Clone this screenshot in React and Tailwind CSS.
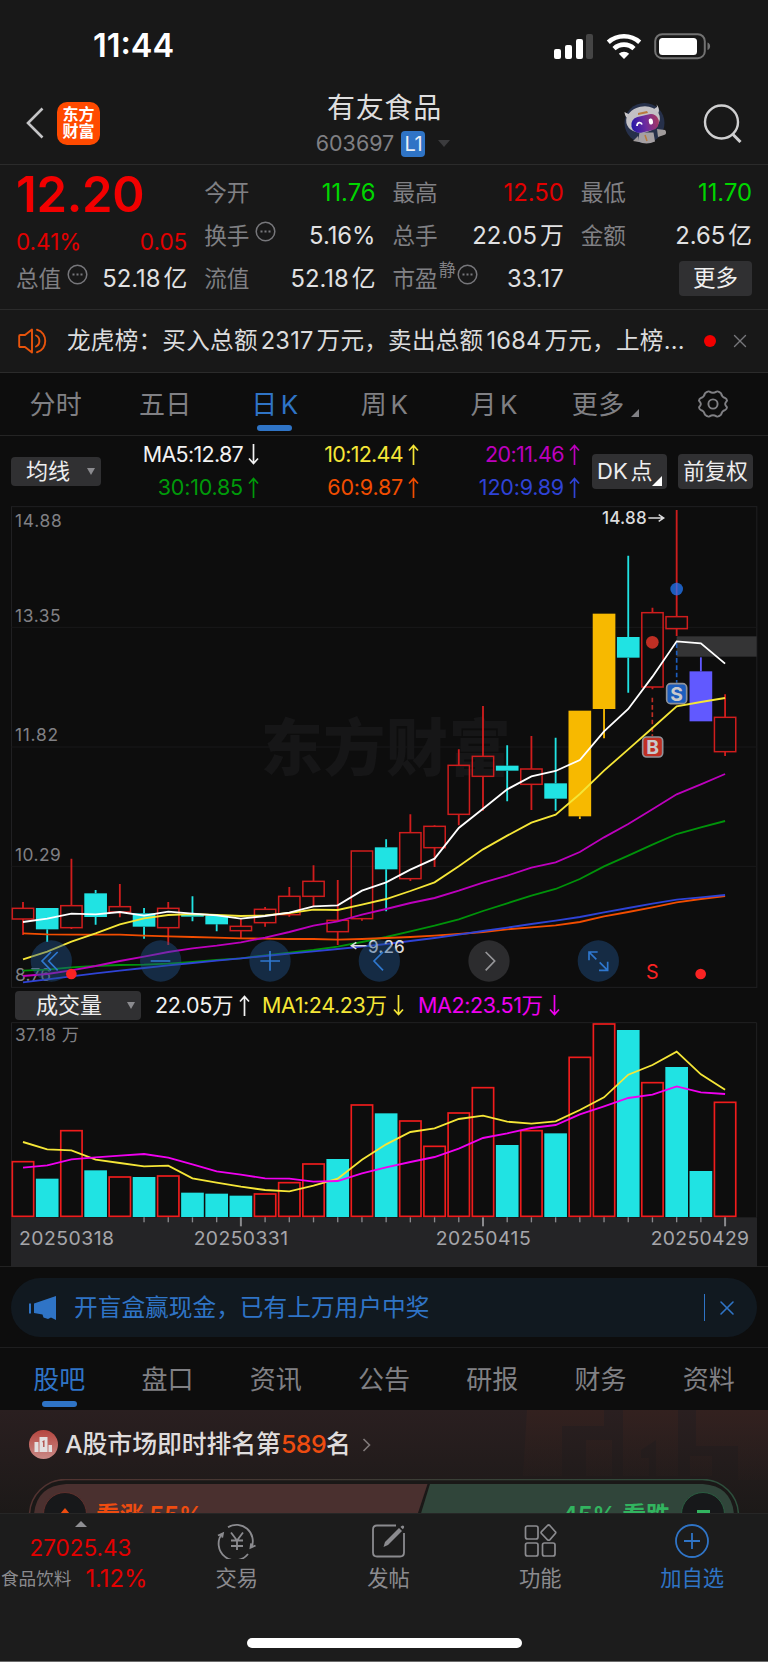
import { X } from 'lucide-react';

const STEP = 72.63;
const cx = (i) => 69 + i * STEP;

const COLORS = {
  up: '#cf1d1d',
  down: '#20e3e3',
  gold: '#f7b900',
  purple: '#6159ff',
};

// kind, high, body top, body bottom, low
const candles = [
  ['up', 1206, 1225, 1257, 1305],
  ['down', 1224, 1224, 1288, 1326],
  ['up', 1076, 1217, 1283, 1287],
  ['down', 1170, 1180, 1251, 1274],
  ['up', 1152, 1220, 1236, 1252],
  ['down', 1224, 1240, 1280, 1316],
  ['up', 1206, 1225, 1283, 1335],
  ['down', 1189, 1243, 1250, 1264],
  ['down', 1245, 1247, 1273, 1294],
  ['up', 1258, 1279, 1292, 1314],
  ['up', 1221, 1228, 1268, 1280],
  ['up', 1161, 1189, 1244, 1250],
  ['up', 1096, 1144, 1189, 1218],
  ['up', 1140, 1261, 1295, 1335],
  ['up', 1053, 1053, 1256, 1262],
  ['down', 1018, 1042, 1108, 1234],
  ['up', 943, 998, 1136, 1143],
  ['up', 976, 979, 1043, 1101],
  ['up', 748, 796, 943, 976],
  ['up', 618, 769, 829, 932],
  ['down', 736, 797, 812, 904],
  ['up', 708, 807, 853, 930],
  ['down', 713, 850, 896, 932],
  ['gold', 632, 632, 949, 957],
  ['gold', 341, 341, 627, 715],
  ['down', 167, 411, 473, 578],
  ['up', 323, 338, 561, 568],
  ['up', 30, 350, 386, 408],
  ['purple', 472, 514, 664, 664],
  ['up', 583, 652, 755, 768],
];

const maLines = [
  { color: '#00930a', values: [1412, 1409, 1402, 1398, 1395, 1394, 1391, 1386, 1380, 1375, 1366, 1358, 1350, 1340, 1326, 1311, 1294, 1277, 1258, 1233, 1210, 1187, 1167, 1137, 1099, 1067, 1034, 1002, 982, 963] },
  { color: '#f24d00', values: [1300, 1303, 1304, 1304, 1304, 1307, 1309, 1311, 1313, 1315, 1316, 1317, 1317, 1319, 1317, 1314, 1311, 1307, 1302, 1296, 1288, 1282, 1276, 1266, 1249, 1236, 1222, 1207, 1197, 1188] },
  { color: '#2f43d6', values: [1447, 1438, 1429, 1420, 1412, 1404, 1396, 1389, 1382, 1375, 1368, 1361, 1354, 1347, 1340, 1332, 1323, 1314, 1304, 1293, 1283, 1272, 1262, 1251, 1237, 1224, 1211, 1199, 1192, 1185] },
  { color: '#bd00bd', values: [1428, 1422, 1411, 1398, 1383, 1370, 1356, 1345, 1337, 1327, 1313, 1296, 1277, 1264, 1244, 1227, 1209, 1194, 1172, 1148, 1127, 1103, 1087, 1056, 1012, 972, 928, 883, 853, 822] },
  { color: '#f5e637', values: [1378, 1355, 1325, 1300, 1273, 1255, 1245, 1242, 1245, 1248, 1246, 1239, 1229, 1230, 1214, 1197, 1173, 1147, 1099, 1048, 1007, 968, 944, 882, 812, 748, 684, 619, 606, 594] },
  { color: '#ffffff', values: [1266, 1256, 1241, 1243, 1236, 1247, 1235, 1241, 1246, 1256, 1248, 1238, 1219, 1216, 1172, 1147, 1109, 1076, 984, 926, 868, 829, 813, 780, 694, 627, 530, 424, 430, 491] },
];

const volumes = [
  ['up', 543], ['down', 595], ['up', 450], ['down', 570], ['up', 589], ['down', 590],
  ['up', 586], ['down', 637], ['down', 640], ['down', 646], ['up', 640], ['up', 606],
  ['up', 550], ['down', 536], ['up', 373], ['down', 399], ['up', 421], ['up', 497],
  ['up', 397], ['up', 321], ['down', 494], ['up', 450], ['down', 459], ['up', 230],
  ['up', 130], ['down', 149], ['up', 306], ['down', 260], ['down', 572], ['up', 365],
];

const volLines = [
  { color: '#f5e637', values: [485, 507, 510, 538, 548, 558, 556, 594, 607, 619, 629, 633, 616, 595, 538, 492, 455, 444, 416, 406, 424, 430, 423, 389, 351, 283, 254, 214, 282, 328] },
  { color: '#f000f0', values: [562, 555, 537, 531, 526, 521, 532, 552, 573, 583, 594, 595, 604, 602, 579, 561, 545, 530, 505, 473, 459, 443, 434, 402, 378, 353, 343, 318, 336, 341] },
];

const toPoints = (values) => values.map((v, i) => `${cx(i)},${v}`).join(' ');

const StatusBar = () => (
  <div className="h-[86px] pl-[93px] pr-[57px] pt-[6px] flex items-center justify-between">
    <span className="text-[32.5px] font-semibold text-white tracking-[0px]">11:44</span>
    <svg width="158" height="28" viewBox="0 0 158 28" fill="#fff">
      <rect x="1" y="17" width="7" height="10" rx="2" />
      <rect x="12" y="13" width="7" height="14" rx="2" />
      <rect x="23" y="7" width="7" height="20" rx="2" />
      <rect x="33" y="2" width="7" height="25" rx="2" fill="#454545" />
      <g fill="none" stroke="#fff" strokeWidth="4.6">
        <path d="M55.3 10.2a23.6 23.6 0 0 1 31.4 0" />
        <path d="M61 16.6a14.6 14.6 0 0 1 20 0" />
      </g>
      <path d="M71 27l-5.2-5.3a7.8 7.8 0 0 1 10.4 0z" />
      <rect x="102.2" y="2.2" width="49.6" height="24" rx="7" fill="none" stroke="#727272" strokeWidth="2" />
      <rect x="106" y="6" width="38" height="17" rx="3.5" />
      <path d="M154.500 10.500c3.500 1 3.500 6.500 0 7.500z" fill="#727272" />
    </svg>
  </div>
);

const Robot = () => (
  <svg width="44" height="42" viewBox="0 0 44 42">
    <defs>
      <linearGradient id="visor" x1="0" y1="0" x2="1" y2="0">
        <stop offset="0" stopColor="#2418a8" />
        <stop offset="0.5" stopColor="#6b2aa0" />
        <stop offset="1" stopColor="#a8395f" />
      </linearGradient>
    </defs>
    <circle cx="21.500" cy="21" r="20" fill="#26304a" />
    <path d="M1.500 10c.5 5 3 7 7 7l4-6c-5 2-8 1-11-1zM34 5c0-2-.5-2.500-1-3 2.500 2 4.500 7 1.500 10l-5-4z" fill="#c9c7cb" />
    <path d="M15 39.500l1.500-9h14l1.500 9a20 20 0 0 1-17 0z" fill="#a5a0a3" />
    <path d="M34 27l8 1c2 2 1 5-1 5l-6 2zM15 34l-5 5 6 1z" fill="#a09b9b" />
    <ellipse cx="20" cy="17.500" rx="17" ry="13" transform="rotate(-12 20 17.500)" fill="#c3c1c5" />
    <path d="M15 11l9-2 1 2-10 2z" fill="#b97a3e" />
    <rect x="8" y="13.500" width="28" height="16" rx="8" transform="rotate(-13 22 21)" fill="url(#visor)" />
    <path d="M14 24c0-4 4-4.500 5-1.500" fill="none" stroke="#fff" strokeWidth="1.800" />
    <rect x="26" y="16.500" width="4" height="6" rx="2" transform="rotate(-12 28 20)" fill="#fff" />
    <path d="M22 33l2 6" stroke="#b97a3e" strokeWidth="1.500" />
  </svg>
);

const Header = () => (
  <div className="h-[79px] border-b border-[#2b2b2b] flex items-center justify-between pl-[26px] pr-[26px] pb-[4px]">
    <div className="w-[200px] flex items-center gap-[13px]">
      <svg width="18" height="32" viewBox="0 0 18 32" fill="none" stroke="#c4c4c6" strokeWidth="2.600">
        <path d="M16.500 1.500L2 16l14.500 14.500" />
      </svg>
      <div className="w-[43px] h-[43px] rounded-[10px] bg-[#ff4a00] text-white text-[16px] leading-[17px] font-bold flex flex-col items-center justify-center">
        <span>东方</span>
        <span>财富</span>
      </div>
    </div>
    <div className="flex flex-col items-center">
      <div className="text-[28px] leading-[34px] tracking-[0.7px] text-[#dededf] pl-[1px] mt-[3px]">有友食品</div>
      <div className="flex items-center h-[29px] mt-[4px] -ml-[2px]">
        <span className="text-[21.5px] text-[#808084]">603697</span>
        <span className="ml-[7px] w-[24px] h-[26px] rounded-[4px] bg-[#2f74c6] text-[#e8eef6] text-[20px] tracking-[-0.5px] flex items-center justify-center">L1</span>
        <span className="ml-[13px] border-x-[6.5px] border-x-transparent border-t-[7px] border-t-[#3b3b3d]"></span>
      </div>
    </div>
    <div className="w-[200px] flex items-center justify-end gap-[36px]">
      <Robot />
      <svg width="39" height="39" viewBox="0 0 39 39" fill="none" stroke="#cfcfd0" strokeWidth="2.400">
        <circle cx="18.500" cy="18" r="16.500" />
        <path d="M29.500 30l8 8" strokeWidth="3" />
      </svg>
    </div>
  </div>
);

const Dots = () => (
  <svg className="-translate-y-1" width="21" height="21" viewBox="0 0 21 21" fill="none" stroke="#77777b" strokeWidth="1.500">
    <circle cx="10.500" cy="10.500" r="9.300" />
    <path d="M5.500 10.500h2M9.500 10.500h2M13.500 10.500h2" strokeWidth="2" />
  </svg>
);

const Stat = ({ label, value, sup, dots, color }) => (
  <div className="h-[43px] flex items-center justify-between">
    <span className="flex items-center text-[22.6px] text-[#808084] whitespace-nowrap">
      {label}
      {sup && <span className="text-[17px] -translate-y-2 ml-[1px]">{sup}</span>}
      {dots && <span className={sup ? 'ml-[1px]' : 'ml-[6px]'}><Dots /></span>}
    </span>
    <span className={`text-[23.8px] whitespace-nowrap [text-autospace:normal] ${color || 'text-[#e1e1e2]'}`}>{value}</span>
  </div>
);

const Quote = () => (
  <div className="h-[145px] border-b border-[#2b2b2b] px-[16px] pt-[6px] grid grid-cols-4 gap-x-[17px]">
    <div>
      <div className="h-[50px] leading-[48px] text-[49px] font-semibold text-[#f20000] tracking-[-0.3px]">12.20</div>
      <div className="h-[36px] pt-[5px] flex items-center justify-between text-[22.5px] text-[#e30000]">
        <span>0.41%</span>
        <span>0.05</span>
      </div>
      <Stat label="总值" value="52.18亿" dots />
    </div>
    <div>
      <Stat label="今开" value="11.76" color="text-[#00d600]" />
      <Stat label="换手" value="5.16%" dots />
      <Stat label="流值" value="52.18亿" />
    </div>
    <div>
      <Stat label="最高" value="12.50" color="text-[#e30000]" />
      <Stat label="总手" value="22.05万" />
      <Stat label="市盈" value="33.17" sup="静" dots />
    </div>
    <div>
      <Stat label="最低" value="11.70" color="text-[#00d600]" />
      <Stat label="金额" value="2.65亿" />
      <div className="h-[43px] flex items-center justify-end">
        <button className="w-[73px] h-[35px] rounded-[4px] bg-[#303032] text-[22.5px] leading-none text-[#f0f0f0]">更多</button>
      </div>
    </div>
  </div>
);

const Notice = () => (
  <div className="h-[63px] border-b border-[#2b2b2b] pl-[18px] pr-[17px] flex items-center">
    <svg width="31" height="26" viewBox="0 0 31 26" fill="none" stroke="#e8540c" strokeWidth="1.900">
      <path d="M1.200 8q0-1 1-1H7l7-5.500v23L7 19H2.200q-1 0-1-1z" strokeLinejoin="round" />
      <path d="M18 7.500c4.500 2 4.500 9 0 11M19 1.800c11 2.500 11 20 0 22.500" strokeLinecap="round" />
    </svg>
    <span className="ml-[18px] w-[620px] text-[23.6px] tracking-[0.25px] text-[#dcdcdd] whitespace-nowrap [text-autospace:normal]">龙虎榜：买入总额2317万元，卖出总额1684万元，上榜...</span>
    <span className="ml-[17px] w-[12px] h-[12px] rounded-full bg-[#f20000]"></span>
    <X className="ml-auto text-[#77777b]" size={22} strokeWidth={1.5} />
  </div>
);

const PeriodTabs = () => {
  const tabs = ['分时', '五日', '日K', '周K', '月K'];
  return (
    <div className="h-[63px] border-b border-[#242424] pl-[1px] grid grid-cols-7 text-[26px] text-[#808084] tracking-[0.3px] [text-autospace:normal]">
      {tabs.map((tab) => {
        const active = tab === '日K';
        return (
          <div key={tab} className={`relative flex items-center justify-center ${active ? 'text-[#2f74c6]' : ''}`}>
            {tab}
            {active && <span className="absolute bottom-[4px] w-[35px] h-[6px] rounded-[3px] bg-[#2f74c6]"></span>}
          </div>
        );
      })}
      <div className="flex items-center justify-center pl-[4px]">
        更多
        <span className="ml-[7px] mt-[18px] border-l-[8px] border-l-transparent border-b-[8px] border-b-[#808084]"></span>
      </div>
      <div className="flex items-center justify-center">
        <svg width="30" height="28" viewBox="0 0 30 28" fill="none" stroke="#808084" strokeWidth="1.900" strokeLinejoin="round">
          <path d="M11.500 1.600Q15 3.800 18.500 1.600Q19.800 1 21 1.900L23 3.200Q23.800 7 27.300 8.200Q28.800 8.900 28.900 10.200Q29 11.200 28 12Q26.400 14 28 16Q29 16.800 28.900 17.800Q28.800 19.100 27.300 19.800Q23.800 21 23 24.800L21 26.100Q19.800 27 18.500 26.400Q15 24.200 11.500 26.400Q10.200 27 9 26.100L7 24.800Q6.200 21 2.700 19.800Q1.200 19.100 1.100 17.800Q1 16.800 2 16Q3.600 14 2 12Q1 11.200 1.100 10.200Q1.200 8.900 2.700 8.200Q6.200 7 7 3.200L9 1.900Q10.200 1 11.500 1.600Z" />
          <circle cx="15" cy="14" r="4.600" />
        </svg>
      </div>
    </div>
  );
};

const Arrow = ({ down }) => (
  <svg className={down ? 'rotate-180' : ''} width="11" height="21" viewBox="0 0 11 21" fill="none" stroke="currentColor" strokeWidth="1.700">
    <path d="M5.500 21V1M1 6.500l4.500-5 4.500 5" />
  </svg>
);

const Ma = ({ text, down, className }) => (
  <div className={`h-[33px] flex items-center justify-end gap-[5px] text-[21.5px] ${className}`}>
    {text}
    <Arrow down={down} />
  </div>
);

const MaBar = () => (
  <div className="h-[70px] pl-[11px] pr-[15px] flex items-center">
    <div className="w-[90px] h-[29px] rounded-[4px] bg-[#303032] text-[22px] leading-none text-[#ededee] flex items-center pl-[15px]">
      均线
      <span className="ml-[17px] border-x-[4px] border-x-transparent border-t-[7px] border-t-[#8b8b8f]"></span>
    </div>
    <div className="w-[480px] grid grid-cols-[158px_160px_161px]">
      <Ma text="MA5:12.87" down className="text-[#f2f2f2] tracking-[-0.7px]" />
      <Ma text="10:12.44" className="text-[#f5e637] tracking-[-0.7px]" />
      <Ma text="20:11.46" className="text-[#bd00bd] tracking-[-0.6px]" />
      <Ma text="30:10.85" className="text-[#009a0a] tracking-[-0.2px]" />
      <Ma text="60:9.87" className="text-[#f24d00] tracking-[-0.2px]" />
      <Ma text="120:9.89" className="text-[#2f43d6] tracking-[-0.2px]" />
    </div>
    <div className="relative ml-auto w-[75px] h-[35px] rounded-[4px] bg-[#303032] text-[22px] leading-[34px] text-[#ededee] pl-[5px] whitespace-nowrap [text-autospace:normal]">
      DK点
      <span className="absolute right-[5px] bottom-[3px] border-l-[10px] border-l-transparent border-b-[10px] border-b-white"></span>
    </div>
    <div className="ml-[11px] w-[75px] h-[35px] rounded-[4px] bg-[#303032] text-[21.5px] leading-[34px] text-[#ededee] text-center">前复权</div>
  </div>
);

const Badge = ({ x, y, letter, fill }) => (
  <g>
    <rect x={x - 30} y={y - 30} width="60" height="60" rx="12" fill={fill} stroke="#8f9299" strokeWidth="5" />
    <text x={x} y={y + 21} textAnchor="middle" fontSize="58" fontWeight="700" fill="#c9c9cc">{letter}</text>
  </g>
);

const PriceChart = () => (
  <svg className="block" width="768" height="482" viewBox="0 18 2304 1446">
    <g stroke="#202022" strokeWidth="3" fill="none">
      <rect x="34.500" y="20" width="2236" height="1442" />
      <path d="M34 382H2270M34 741H2270M34 1099H2270" stroke="#19191a" />
    </g>
    <text x="782" y="812" fontSize="186" fontWeight="900" fill="#161617" textLength="750">东方财富</text>
    <rect x="2030" y="409" width="240" height="61" fill="#343435" />
    <g fontSize="52" fill="#808084">
      <text x="45" y="80" textLength="140">14.88</text>
      <text x="45" y="365" textLength="137">13.35</text>
      <text x="45" y="723" textLength="129">11.82</text>
      <text x="45" y="1083" textLength="137">10.29</text>
      <text x="45" y="1443" textLength="108">8.76</text>
    </g>
    {candles.map(([kind, high, top, bottom, low], i) => {
      const color = COLORS[kind];
      const x = cx(i);
      return (
        <g key={i} stroke={color} strokeWidth="5.500">
          <path d={`M${x} ${high}V${top}M${x} ${bottom}V${low}`} />
          {kind === 'up' ? (
            <rect x={x - 32} y={top} width="64" height={bottom - top} fill="none" strokeWidth="4.500" />
          ) : (
            <rect x={x - 34} y={top} width="68" height={bottom - top} fill={color} stroke="none" />
          )}
        </g>
      );
    })}
    <path d="M2030 430V548" stroke="#1c5dbd" strokeWidth="5" strokeDasharray="14 8" />
    <path d="M1957 593V708" stroke="#bf2f24" strokeWidth="5" strokeDasharray="14 8" />
    <circle cx="2030" cy="267" r="19" fill="#1c5dbd" />
    <path d="M2030 248V286" stroke="#5b5bc0" strokeWidth="5" />
    <circle cx="1957" cy="427" r="19" fill="#bf2f24" />
    <Badge x={2030} y={581} letter="S" fill="#1c5dbd" />
    <Badge x={1958} y={741} letter="B" fill="#bf2f24" />
    {maLines.map((line) => (
      <polyline key={line.color} points={toPoints(line.values)} fill="none" stroke={line.color} strokeWidth="5.500" />
    ))}
    <g fill="#dcdcdd" fontSize="51" fontWeight="500">
      <text x="1806" y="73" textLength="134">14.88</text>
      <text x="1104" y="1358" textLength="110">9.26</text>
      <path d="M1945 54h46M1976 44l15 10-15 10M1100 1337h-46M1069 1327l-15 10 15 10" fill="none" stroke="#dcdcdd" strokeWidth="4.500" />
    </g>
    <g fill="#215591" fillOpacity="0.42">
      {[154, 482, 810, 1138, 1795].map((x) => (
        <circle key={x} cx={x} cy="1383" r="62" />
      ))}
    </g>
    <circle cx="1467" cy="1383" r="62" fill="#2c2c2e" />
    <g fill="none" stroke="#2f78cf" strokeWidth="5">
      <path d="M153 1356l-27 27 27 28M173 1356l-27 27 27 28" />
      <path d="M452 1383h59M781 1383h59M810 1353v59M1149 1356l-27 27 27 28" />
      <path d="M1767 1381v-25h26M1767 1356l22 22M1823 1385v26h-26M1823 1411l-24-24" />
    </g>
    <path d="M1457 1356l27 27-27 28" fill="none" stroke="#97979a" strokeWidth="5" />
    <circle cx="214" cy="1422" r="16" fill="#fa2323" />
    <circle cx="2102" cy="1422" r="16" fill="#fa2323" />
    <text x="1957" y="1437" textAnchor="middle" fontSize="59" fill="#fa2323">S</text>
  </svg>
);

const VolumeBar = () => (
  <div className="h-[34px] pl-[15px] flex items-center text-[21.5px]">
    <div className="w-[126px] h-[29px] rounded-[4px] bg-[#303032] text-[22px] leading-none text-[#ededee] flex items-center pl-[21px]">
      成交量
      <span className="ml-[25px] border-x-[4px] border-x-transparent border-t-[7px] border-t-[#8b8b8f]"></span>
    </div>
    <div className="ml-[14px] w-[107px] flex items-center gap-[6px] text-[#f2f2f2] tracking-[-0.3px]">22.05万<Arrow /></div>
    <div className="w-[156px] flex items-center gap-[6px] text-[#f5e637] tracking-[-0.4px]">MA1:24.23万<Arrow down /></div>
    <div className="flex items-center gap-[6px] text-[#f000f0] tracking-[-0.4px]">MA2:23.51万<Arrow down /></div>
  </div>
);

const VolumeChart = () => (
  <svg className="block" width="768" height="245" viewBox="0 125 2304 735">
    <path d="M34.500 711V127H2270V711" fill="none" stroke="#202022" strokeWidth="3" />
    <rect x="33" y="711" width="2238" height="149" fill="#242426" />
    <path d="M0 859H2304" stroke="#262626" strokeWidth="3" />
    <text x="45" y="182" fontSize="52" fill="#808084" textLength="192">37.18 万</text>
    {volumes.map(([kind, top], i) =>
      kind === 'up' ? (
        <rect key={i} x={cx(i) - 32} y={top + 1} width="64" height={707 - top} fill="none" stroke="#f01c1c" strokeWidth="5" />
      ) : (
        <rect key={i} x={cx(i) - 34} y={top} width="68" height={710 - top} fill={COLORS.down} />
      )
    )}
    {volLines.map((line) => (
      <polyline key={line.color} points={toPoints(line.values)} fill="none" stroke={line.color} strokeWidth="5.500" />
    ))}
    {volumes.map((_, i) => {
      if (i < 5) return null;
      const major = i % 10 === 9;
      return <path key={i} d={`M${cx(i)} 711v${major ? 27 : 15}`} stroke="#8a8a8d" strokeWidth={major ? 6 : 4} />;
    })}
    <g fontSize="58" fill="#a6a6aa">
      <text x="57" y="795" textLength="285">20250318</text>
      <text x="581" y="795" textLength="283">20250331</text>
      <text x="1307" y="795" textLength="285">20250415</text>
      <text x="1952" y="795" textLength="295">20250429</text>
    </g>
  </svg>
);

const Promo = () => (
  <div className="h-[81px] border-b border-[#1e1e1f] px-[11px] pt-[11px]">
    <div className="h-[59px] rounded-full bg-[#111920] flex items-center pl-[18px] pr-[18px] text-[#2f74c6]">
      <svg width="28" height="24" viewBox="0 0 28 24" fill="currentColor">
        <path d="M0 7.500h2v10H0zM5 7.500L27 0v24l-5-2.500-3 1.500-4.500-1.500-1-3L5 17z" />
      </svg>
      <span className="ml-[17px] text-[23.7px]">开盲盒赢现金，已有上万用户中奖</span>
      <span className="ml-auto w-[1.5px] h-[27px] bg-[#2f74c6]"></span>
      <X className="ml-[10px]" size={24} strokeWidth={1.6} />
    </div>
  </div>
);

const SectionTabs = () => {
  const tabs = ['股吧', '盘口', '资讯', '公告', '研报', '财务', '资料'];
  return (
    <div className="h-[62px] px-[5px] grid grid-cols-7 text-[26px] text-[#808084]">
      {tabs.map((tab, i) => (
        <div key={tab} className={`relative flex items-center justify-center ${i === 0 ? 'text-[#2f74c6]' : ''}`}>
          {tab}
          {i === 0 && <span className="absolute bottom-[3px] w-[35px] h-[6px] rounded-[3px] bg-[#2f74c6]"></span>}
        </div>
      ))}
    </div>
  );
};

const Sentiment = () => (
  <div className="relative h-[103px] overflow-hidden bg-linear-to-b from-[#2a1f20] to-[#1c1918]">
    <svg className="absolute right-0 top-0" width="248" height="72" viewBox="0 0 248 72">
      <defs>
        <linearGradient id="podium" gradientUnits="userSpaceOnUse" x1="0" y1="0" x2="0" y2="72">
          <stop offset="0" stopColor="#33211f" />
          <stop offset="1" stopColor="#2a1e1c" stopOpacity="0.200" />
        </linearGradient>
      </defs>
      <path d="M7 0h77v16H42v50H3zM103 0h55v66h-22V30l-15 10v8h8v18h-26zM66 30h26v36H66zM176 0h72v70h-30V36h-42zM170 46h22v20h-22z" fill="url(#podium)" />
    </svg>
    <div className="relative h-[69px] pl-[29px] flex items-center">
      <svg width="29" height="29" viewBox="0 0 29 29">
        <defs>
          <linearGradient id="rank" x1="0" y1="0" x2="0" y2="1">
            <stop offset="0" stopColor="#b6463f" />
            <stop offset="1" stopColor="#c98a87" />
          </linearGradient>
        </defs>
        <circle cx="14.500" cy="14.500" r="14.500" fill="url(#rank)" />
        <path d="M5.500 12h4v10h-4zM10.500 7h8v15h-8zM19.500 15h3.500v7h-3.500z" fill="#e3dfdf" />
        <path d="M13.500 12l1.300-.8V17" fill="none" stroke="#b0504b" strokeWidth="1.400" />
      </svg>
      <span className="ml-[7px] mt-[1px] text-[24.9px] tracking-[-0.1px] font-medium text-[#dfdcdc]">
        A股市场即时排名第<span className="text-[#ee4c10] tracking-[-0.5px]">589</span>名
      </span>
      <svg className="ml-[11px]" width="9" height="14" viewBox="0 0 9 14" fill="none" stroke="#807a7a" strokeWidth="1.600">
        <path d="M1.500 1l6 6-6 6" />
      </svg>
    </div>
    <svg className="relative block" width="768" height="34" viewBox="0 0 768 34">
      <defs>
        <linearGradient id="voteEdge">
          <stop offset="0" stopColor="#523230" />
          <stop offset="0.500" stopColor="#3d3b35" />
          <stop offset="1" stopColor="#2c4f3c" />
        </linearGradient>
      </defs>
      <rect x="29.500" y="0.500" width="709" height="72" rx="36" fill="#1a1817" stroke="url(#voteEdge)" strokeWidth="1.500" />
      <path d="M34 36Q36 7 66 5H427.500L418 34z" fill="#4a302f" />
      <path d="M430 5H703Q732 7 734 36H420.500z" fill="#30453a" />
      <circle cx="65" cy="35" r="21.500" fill="#17181a" stroke="#5e302d" strokeWidth="1" />
      <circle cx="703" cy="35" r="21.500" fill="#17181a" stroke="#2a5c40" strokeWidth="1" />
      <path d="M65 29l-5 6h10z" fill="#ee4c10" />
      <path d="M697 31h13v4h-13z" fill="#32b45f" />
      <text x="96" y="45" fontSize="24" fontWeight="600" fill="#ee4c10" textLength="107">看涨 55%</text>
      <text x="562" y="45" fontSize="24" fontWeight="600" fill="#32b45f" textLength="108">45% 看跌</text>
    </svg>
  </div>
);

const TradeIcon = () => (
  <svg width="40" height="36" viewBox="0 0 40 36" fill="none" stroke="currentColor" strokeWidth="1.800">
    <path d="M11 4.200A16.300 16.300 0 0 1 34.500 24.500M38.500 22.500l-5 2.300.6-4.500M31 31A16.300 16.300 0 0 1 5.200 10.500M1 12.500l5-2.300-.8 4.500" />
    <path d="M14 9.500l6 8 6-8M14 17.500h12M14 23h12M20 17.500V27" />
  </svg>
);

const PostIcon = () => (
  <svg width="34" height="36" viewBox="0 0 34 36" fill="none" stroke="currentColor" strokeWidth="1.800">
    <path d="M24 2.500H5q-4 0-4 4V29.500q0 4 4 4H28q4 0 4-4V10" />
    <path d="M13 19L27 5l3 3L16 22l-4.500 2z" fill="currentColor" stroke="none" />
    <path d="M28.500 4l1-1q1.500-1 2.300 0t0 2l-1 1.200z" fill="currentColor" stroke="none" />
  </svg>
);

const GridIcon = () => (
  <svg width="33" height="36" viewBox="0 0 33 36" fill="none" stroke="currentColor" strokeWidth="1.700">
    <rect x="1.500" y="3" width="12.500" height="13" rx="2" />
    <rect x="1.500" y="20" width="12.500" height="13" rx="2" />
    <rect x="18.500" y="20" width="12.500" height="13" rx="2" />
    <path d="M23.500 2.500l-6 6.200q-1 .9 0 1.800l6 6.300q1.200.9 2.300 0l5.500-6.300q1-.9 0-1.800L25.800 2.500q-1.100-1-2.300 0z" />
  </svg>
);

const AddIcon = () => (
  <svg width="36" height="36" viewBox="0 0 36 36" fill="none" stroke="currentColor" strokeWidth="1.800">
    <circle cx="18" cy="18" r="16" />
    <path d="M10 18h16M18 10v16" />
  </svg>
);

const BottomNav = () => {
  const items = [
    { label: '交易', icon: TradeIcon },
    { label: '发帖', icon: PostIcon },
    { label: '功能', icon: GridIcon },
    { label: '加自选', icon: AddIcon, active: true },
  ];
  return (
    <div className="h-[149px] bg-[#1c1c1c] border-t border-[#262626] border-b border-b-[#6a6a6a] flex flex-col justify-between">
      <div className="h-[80px] flex">
        <div className="w-[161px] flex flex-col items-center">
          <span className="mt-[7px] border-x-[6px] border-x-transparent border-b-[6px] border-b-[#8f8f93]"></span>
          <span className="mt-[5px] h-[32px] leading-[32px] text-[22.5px] text-[#e30000]">27025.43</span>
          <div className="w-full pl-[1px] h-[30px] flex items-center gap-[14px] whitespace-nowrap">
            <span className="text-[17.6px] text-[#8b8b8f]">食品饮料</span>
            <span className="text-[23.8px] text-[#e30000]">1.12%</span>
          </div>
        </div>
        {items.map((item) => {
          const Icon = item.icon;
          return (
            <div key={item.label} className={`flex-1 flex flex-col items-center pt-[9px] ${item.active ? 'text-[#2f74c6]' : 'text-[#8b8b8f]'}`}>
              <Icon />
              <span className="mt-[4px] text-[21.300px] leading-[30px]">{item.label}</span>
            </div>
          );
        })}
      </div>
      <div className="w-[275px] h-[10px] mb-[13px] rounded-full bg-white self-center"></div>
    </div>
  );
};

export default function App() {
  return (
    <div className="w-[768px] h-[1662px] overflow-hidden bg-[#0d0d0d] font-[Inter,'Noto_Sans_CJK_SC',sans-serif]">
      <div className="bg-[#181818]">
        <StatusBar />
        <Header />
        <Quote />
        <Notice />
      </div>
      <PeriodTabs />
      <MaBar />
      <PriceChart />
      <VolumeBar />
      <VolumeChart />
      <Promo />
      <SectionTabs />
      <Sentiment />
      <BottomNav />
    </div>
  );
}
